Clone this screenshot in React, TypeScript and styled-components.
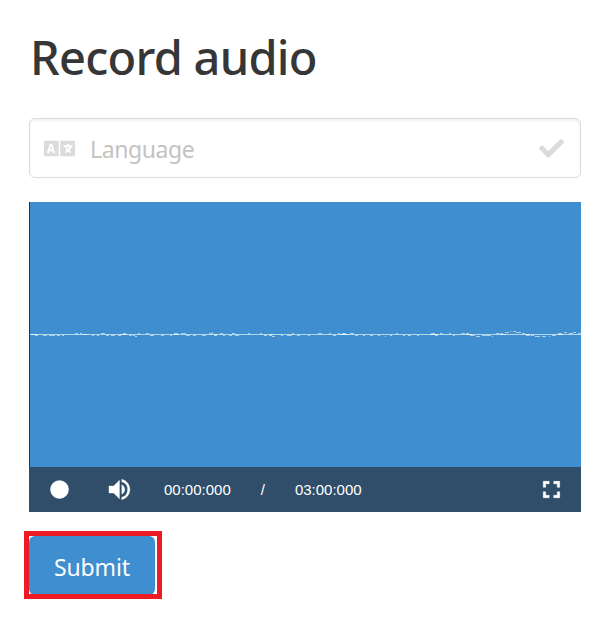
import React from "react";
import styled, { createGlobalStyle } from "styled-components";
import { FaCheck, FaLanguage } from "react-icons/fa";

const GlobalStyle = createGlobalStyle`
  * { box-sizing: border-box; }
  body { margin: 0; background: #fff; font-family: "Noto Sans", "Open Sans", sans-serif; }
`;

const Page = styled.main`
  width: 616px;
  height: 626px;
  padding: 24px 35px 0 29px;
  display: flex;
  flex-direction: column;
  align-items: flex-start;
  overflow: hidden;
`;

const Title = styled.h1`
  margin: 0 0 27px 1px;
  height: 67px;
  line-height: 67px;
  font-size: 47px;
  font-weight: 500;
  letter-spacing: -0.75px;
  color: #363636;
  white-space: nowrap;
`;

const Field = styled.label`
  width: 552px;
  height: 60px;
  padding: 0 16px 0 14px;
  display: flex;
  align-items: center;
  border: 1px solid #dbdbdb;
  border-radius: 6px;
  box-shadow: inset 0 2px 3px rgba(10, 10, 10, 0.06);
  color: #dbdbdb;
`;

const LanguageIcon = styled(FaLanguage)`
  flex: none;
  width: 31px;
  height: 25px;
`;

const FieldInput = styled.input`
  flex: 1;
  min-width: 0;
  height: 100%;
  padding: 1px 0 0 15px;
  border: 0;
  outline: 0;
  background: transparent;
  font: 400 23px "Noto Sans", sans-serif;
  letter-spacing: -0.4px;
  color: #363636;
  &::placeholder { color: #c3c3c3; opacity: 1; }
`;

const Player = styled.section`
  width: 552px;
  height: 310px;
  margin-top: 24px;
  display: flex;
  flex-direction: column;
`;

const WaveArea = styled.div`
  height: 265px;
  border-left: 1px solid #2b333f;
  background: #3f8ed0;
  svg { display: block; }
`;

const ControlBar = styled.div`
  height: 45px;
  display: flex;
  align-items: center;
  background: #304e69;
  color: #fff;
`;

const Control = styled.button`
  width: 60px;
  height: 45px;
  padding: 0;
  display: grid;
  place-items: center;
  border: 0;
  background: transparent;
  color: inherit;
  svg { display: block; }
`;

const Time = styled.span<{ $left: number }>`
  margin-left: ${({ $left }) => $left}px;
  font: 15px/45px "Liberation Sans", Arial, sans-serif;
`;

const Spacer = styled.div`
  flex: 1;
`;

const Highlight = styled.div`
  width: 138px;
  height: 68px;
  margin: 19px 0 0 -5px;
  border: 5px solid #ed1c24;
  overflow: hidden;
`;

const Submit = styled.button`
  display: block;
  width: 126px;
  height: 59px;
  padding: 3px 0 0;
  border: 0;
  border-radius: 6px;
  background: #3f8ed0;
  color: #fff;
  font: 400 23px "Noto Sans", sans-serif;
  letter-spacing: -0.1px;
`;

/* Signal samples: [x, offset from the centre line, length]. */
const samples: number[][] = [
  [1, 0, 3], [5, 1, 3], [13, 1, 4], [19, 1, 6], [27, 1, 3], [32, 1, 2], [45, -1, 3], [50, -1, 2],
  [62, 1, 2], [67, 1, 2], [71, -1, 4], [76, 1, 3], [81, 1, 4], [88, 1, 3], [93, -1, 3], [99, 1, 3],
  [103, 1, 2], [105, 2, 2], [108, -1, 2], [116, -1, 3], [120, 1, 4], [131, 1, 3], [140, 1, 2],
  [144, -1, 4], [151, -1, 5], [156, 1, 4], [163, 1, 3], [172, 1, 4], [179, -1, 4], [182, -2, 1],
  [184, 1, 3], [190, -1, 3], [193, 1, 2], [199, 1, 3], [202, -1, 3], [205, 1, 4], [218, -1, 2],
  [230, -1, 2], [234, 1, 3], [239, 1, 3], [242, 2, 3], [251, 1, 2], [257, 1, 5], [262, -1, 2],
  [267, 1, 3], [278, 1, 2], [288, -1, 4], [299, -1, 2], [303, 1, 3], [308, -1, 2], [312, -1, 4],
  [320, -1, 4], [325, 1, 3], [333, 1, 2], [340, 1, 3], [348, 1, 2], [355, 2, 1], [360, 1, 2],
  [366, -1, 2], [373, 1, 2], [378, 1, 3], [387, 1, 2], [401, -1, 4], [405, 1, 3], [410, -1, 3],
  [419, -1, 2], [423, 1, 2], [431, -1, 4], [436, -1, 3], [440, 1, 5], [446, 2, 4], [452, 1, 5],
  [457, 1, 4], [462, 2, 1], [466, -1, 4], [471, -1, 2], [475, -2, 4], [480, -3, 1], [483, -3, 3],
  [486, -2, 5], [492, -1, 3], [496, 1, 4], [501, 1, 3], [505, 2, 5], [512, 2, 4], [519, 2, 1],
  [522, 1, 4], [528, -1, 4], [534, -2, 3], [539, -1, 4], [543, -2, 3], [548, -1, 3],
];

function Waveform() {
  return (
    <svg width="551" height="265" viewBox="0 0 551 265" shapeRendering="crispEdges" aria-hidden="true">
      <path d="M0 132.5h551" stroke="#b3d6e9" />
      {samples.map(([x, y, length], index) => (
        <path key={index} d={`M${x} ${132.5 + y}h${length}`} stroke="#a9d0e8" />
      ))}
      <path d="M1 132.5h6M53 132.5h4M90 132.5h7M144 132.5h5M184 132.5h3M240 132.5h3M310 132.5h9M400 132.5h8M436 132.5h6M470 132.5h6M495 132.5h5M528 132.5h5" stroke="#e0f3f4" />
    </svg>
  );
}

export default function App() {
  return (
    <>
      <GlobalStyle />
      <Page>
        <Title>Record audio</Title>
        <Field>
          <LanguageIcon />
          <FieldInput placeholder="Language" aria-label="Language" />
          <FaCheck size={25} />
        </Field>
        <Player>
          <WaveArea><Waveform /></WaveArea>
          <ControlBar>
            <Control aria-label="Record">
              <svg width="20" height="20"><circle cx="10.5" cy="9.5" r="9.3" fill="currentColor" /></svg>
            </Control>
            <Control aria-label="Volume">
              <svg width="28" height="28" viewBox="-0.4 0.4 24 24" fill="currentColor">
                <path d="M3 9v6h4l5 5V4L7 9H3zm13.5 3A4.5 4.5 0 0 0 14 7.970v8.050A4.5 4.5 0 0 0 16.5 12zM14 3.230v2.060a7 7 0 0 1 0 13.420v2.060a9 9 0 0 0 0-17.540z" stroke="currentColor" strokeWidth="0.3" />
              </svg>
            </Control>
            <Time $left={15}>00:00:000</Time>
            <Time $left={30}>/</Time>
            <Time $left={30}>03:00:000</Time>
            <Spacer />
            <Control aria-label="Fullscreen">
              <svg width="28" height="28" viewBox="-0.4 0.4 24 24" fill="currentColor">
                <path d="M7 14H5v5h5v-2H7v-3zm-2-4h2V7h3V5H5v5zm12 7h-3v2h5v-5h-2v3zM14 5v2h3v3h2V5h-5z" stroke="currentColor" strokeWidth="0.5" />
              </svg>
            </Control>
          </ControlBar>
        </Player>
        <Highlight><Submit>Submit</Submit></Highlight>
      </Page>
    </>
  );
}
